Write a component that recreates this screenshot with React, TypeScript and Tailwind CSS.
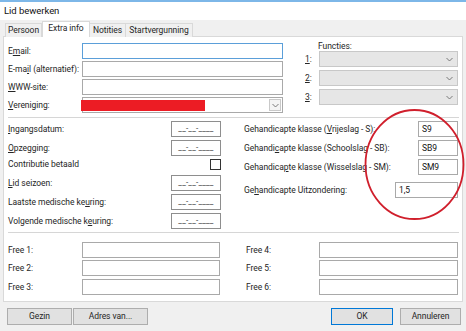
import React from "react";

const F = { fontFamily: "Roboto, 'Noto Sans', sans-serif" };

function Acc({ text, i }: { text: string; i: number }) {
  return (
    <span className="whitespace-nowrap">
      {text.slice(0, i)}
      <span className="underline underline-offset-[1px] decoration-[0.5px]">{text[i]}</span>
      {text.slice(i + 1)}
    </span>
  );
}

function Chevron() {
  return (
    <svg width="7" height="5" viewBox="0 0 7 5" className="block">
      <polyline points="0.5,1 3.5,4 6.5,1" fill="none" stroke="#6d6d6d" strokeWidth="0.9" />
    </svg>
  );
}

function Input({ cls, children, focus }: { cls?: string; children?: React.ReactNode; focus?: boolean }) {
  return (
    <div
      className={`h-[16px] bg-white border flex items-center px-[3px] text-[8.5px] text-[#111] ${
        focus ? "border-[#5b9fd9]" : "border-[#a9a9a9]"
      } ${cls ?? ""}`}
    >
      {children}
    </div>
  );
}

function DateInput() {
  return (
    <div className="h-[16px] w-[50px] bg-white border border-[#8e8e8e] flex items-center justify-center text-[8px] text-[#222] leading-none tracking-[0.2px]">
      __-__-____
    </div>
  );
}

function GrayCombo() {
  return (
    <div className="h-[16px] w-[139px] bg-[#e6e6e6] border border-[#c8c8c8] flex items-center justify-end pr-[4px]">
      <Chevron />
    </div>
  );
}

export default function App() {
  return (
    <div className="w-[466px] h-[331px] bg-[#f0f0f0] relative overflow-hidden text-[8.5px] text-[#262626] tracking-[-0.05px]" style={F}>
      {/* title */}
      <div className="h-[20px] border-t-2 border-[#7db7e8] bg-white pl-[4px] flex items-center text-[9.5px] text-[#111]">
        Lid bewerken
      </div>
      {/* tabs */}
      <div className="h-[17px] flex items-end pl-[5px]">
        <div className="h-[14px] w-[37px] border border-b-0 border-[#d9d9d9] bg-[#f0f0f0] flex items-center justify-center">Persoon</div>
        <div className="relative z-10 h-[16px] w-[48px] border border-b-0 border-[#d9d9d9] bg-white flex items-center justify-center pb-[2px]">Extra info</div>
        <div className="h-[14px] w-[36px] border border-b-0 border-l-0 border-[#d9d9d9] bg-[#f0f0f0] flex items-center justify-center">Notities</div>
        <div className="h-[14px] w-[67px] border border-b-0 border-l-0 border-[#d9d9d9] bg-[#f0f0f0] flex items-center justify-center">Startvergunning</div>
      </div>
      {/* panel */}
      <div className="-mt-px mx-[3px] h-[266px] bg-white border border-[#d9d9d9] flex flex-col">
        {/* section 1 */}
        <div className="h-[80px] flex items-start pl-[4px]">
          <div className="mt-[6px] w-[275px] flex flex-col gap-[2px]">
            <div className="flex items-center h-[16px]">
              <div className="w-[74px]"><Acc text="Email:" i={1} /></div>
              <Input cls="flex-1" focus />
            </div>
            <div className="flex items-center h-[16px]">
              <div className="w-[74px]"><Acc text="E-mail (alternatief):" i={4} /></div>
              <Input cls="flex-1" />
            </div>
            <div className="flex items-center h-[16px]">
              <div className="w-[74px]"><Acc text="WWW-site:" i={0} /></div>
              <Input cls="flex-1" />
            </div>
            <div className="flex items-center h-[16px]">
              <div className="w-[74px]"><Acc text="Vereniging:" i={0} /></div>
              <div className="flex-1 h-[16px] bg-white border border-[#a9a9a9] flex items-center justify-between">
                <div className="-ml-[2px] w-[124px] h-[11px] bg-[#ec1c24]" />
                <div className="mr-[1px] w-[12px] h-[12px] border border-[#c9c9c9] bg-[#f4f4f4] flex items-center justify-center">
                  <Chevron />
                </div>
              </div>
            </div>
          </div>
          <div className="ml-[22px] mt-[4px] w-[153px] flex flex-col">
            <div className="h-[10px] leading-[10px] pl-[13px]">Functies:</div>
            <div className="flex items-center h-[16px]">
              <div className="w-[14px]"><Acc text="1:" i={0} /></div>
              <GrayCombo />
            </div>
            <div className="flex items-center h-[16px] mt-[3px]">
              <div className="w-[14px]"><Acc text="2:" i={0} /></div>
              <GrayCombo />
            </div>
            <div className="flex items-center h-[16px] mt-[3px]">
              <div className="w-[14px]"><Acc text="3:" i={0} /></div>
              <GrayCombo />
            </div>
          </div>
        </div>
        <div className="h-px bg-[#d6d6d6] ml-[4px] mr-[3px]" />
        {/* section 2 */}
        <div className="h-[114px] flex items-start pl-[4px]">
          <div className="w-[213px] flex flex-col">
            <div className="mt-[3px] h-[16px] flex items-center justify-between">
              <Acc text="Ingangsdatum:" i={0} />
              <DateInput />
            </div>
            <div className="mt-[3px] h-[16px] flex items-center justify-between">
              <Acc text="Opzegging:" i={0} />
              <DateInput />
            </div>
            <div className="mt-[3px] h-[11px] flex items-center justify-between">
              <span>Contributie betaald</span>
              <div className="w-[11px] h-[11px] border border-[#333] bg-white" />
            </div>
            <div className="mt-[5px] h-[16px] flex items-center justify-between">
              <Acc text="Lid seizoen:" i={0} />
              <DateInput />
            </div>
            <div className="mt-[3px] h-[16px] flex items-center justify-between">
              <Acc text="Laatste medische keuring:" i={19} />
              <DateInput />
            </div>
            <div className="mt-[3px] h-[16px] flex items-center justify-between">
              <Acc text="Volgende medische keuring:" i={19} />
              <DateInput />
            </div>
          </div>
          <div className="ml-[23px] w-[214px] flex flex-col">
            <div className="mt-[3px] h-[16px] flex items-center justify-between">
              <Acc text="Gehandicapte klasse (Vrijeslag - S):" i={21} />
              <Input cls="w-[40px]">S9</Input>
            </div>
            <div className="mt-[3px] h-[16px] flex items-center justify-between">
              <Acc text="Gehandicapte klasse (Schoolslag - SB):" i={7} />
              <Input cls="w-[40px]">SB9</Input>
            </div>
            <div className="mt-[3px] h-[16px] flex items-center justify-between">
              <Acc text="Gehandicapte klasse (Wisselslag - SM):" i={9} />
              <Input cls="w-[40px]">SM9</Input>
            </div>
            <div className="mt-[7px] h-[16px] flex items-center justify-between">
              <Acc text="Gehandicapte Uitzondering:" i={2} />
              <Input cls="w-[63px]">1,5</Input>
            </div>
          </div>
        </div>
        <div className="h-px bg-[#d6d6d6] ml-[4px] mr-[3px]" />
        {/* section 3 */}
        <div className="flex items-start pl-[4px]">
          <div className="w-[212px] flex flex-col">
            {["Free 1:", "Free 2:", "Free 3:"].map((t, i) => (
              <div key={t} className={`h-[16px] flex items-center ${i === 0 ? "mt-[9px]" : i === 1 ? "mt-[2px]" : "mt-[3px]"}`}>
                <div className="w-[74px]">{t}</div>
                <Input cls="w-[138px]" />
              </div>
            ))}
          </div>
          <div className="ml-[26px] w-[212px] flex flex-col">
            {["Free 4:", "Free 5:", "Free 6:"].map((t, i) => (
              <div key={t} className={`h-[16px] flex items-center ${i === 0 ? "mt-[9px]" : i === 1 ? "mt-[2px]" : "mt-[3px]"}`}>
                <div className="w-[73px]">{t}</div>
                <Input cls="w-[139px]" />
              </div>
            ))}
          </div>
        </div>
      </div>
      {/* footer */}
      <div className="flex items-start pt-[6px] pl-[7px] pr-[5px]">
        <button className="h-[17px] w-[65px] bg-[#e1e1e1] border border-[#adadad] flex items-center justify-center text-[8.5px]">Gezin</button>
        <button className="ml-[1px] h-[17px] w-[75px] bg-[#e1e1e1] border border-[#adadad] flex items-center justify-center text-[8.5px]">Adres van...</button>
        <div className="flex-1" />
        <button className="h-[17px] w-[62px] bg-[#e1e1e1] border border-[#0078d7] flex items-center justify-center text-[8.5px]">OK</button>
        <button className="ml-[7px] h-[17px] w-[61px] bg-[#e1e1e1] border border-[#adadad] flex items-center justify-center text-[8.5px]">Annuleren</button>
      </div>
      {/* red annotation */}
      <svg className="absolute left-0 top-0 pointer-events-none" width="466" height="331">
        <ellipse cx="414.5" cy="164.5" rx="49" ry="54.5" fill="none" stroke="#d01f2c" strokeWidth="1.8" />
      </svg>
    </div>
  );
}
